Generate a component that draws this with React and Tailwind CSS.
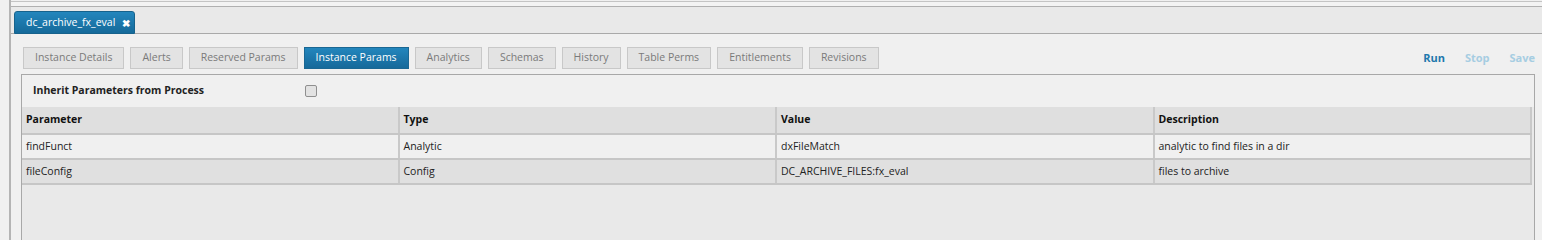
import React, { useState } from 'react';

const tabs = [
  'Instance Details',
  'Alerts',
  'Reserved Params',
  'Instance Params',
  'Analytics',
  'Schemas',
  'History',
  'Table Perms',
  'Entitlements',
  'Revisions',
];

const rows = [
  { param: 'findFunct', type: 'Analytic', value: 'dxFileMatch', desc: 'analytic to find files in a dir' },
  { param: 'fileConfig', type: 'Config', value: 'DC_ARCHIVE_FILES:fx_eval', desc: 'files to archive' },
];

export default function App() {
  const [active, setActive] = useState('Instance Params');
  const [inherit, setInherit] = useState(false);

  return (
    <div className="w-full h-[240px] bg-[#f0f0f0] flex overflow-hidden text-[10.5px] text-[#333]" style={{ fontFamily: '"Open Sans", "Noto Sans", sans-serif' }}>
      <div className="w-[9px] shrink-0 bg-[#f0f0f0]" />
      <div className="flex-1 flex flex-col border-l-2 border-[#b4b4b4]">
        {/* top strip */}
        <div className="h-[2px] border-b border-[#c4c4c4] bg-[#f0f0f0]" />
        <div className="h-[5px] bg-[#f3f3f3] border-b border-[#b0b0b0]" />
        <div className="h-[27px] bg-[#e9e9e9] border-b border-[#a9a9a9] flex items-end pl-[3px]">
          <div className="h-[23px] -mb-px flex items-center gap-[7px] pl-[11px] pr-[4px] rounded-t-[3px] border border-[#16628c] bg-gradient-to-b from-[#2386bd] to-[#156a9a] text-white text-[10.5px]">
            <span>dc_archive_fx_eval</span>
            <span className="font-bold text-[10px] leading-none">✖</span>
          </div>
        </div>

        {/* sub nav */}
        <div className="flex items-center justify-between pl-[12px] pr-[7px] pt-[13px] pb-[5px]">
          <div className="flex gap-[6px]">
            {tabs.map((t) => (
              <button
                key={t}
                onClick={() => setActive(t)}
                className={
                  active === t
                    ? 'h-[22px] px-[11px] border border-[#1a6793] bg-gradient-to-b from-[#2386bd] to-[#16699a] text-white'
                    : 'h-[22px] px-[11px] border border-[#c8c8c8] bg-[#e3e3e3] text-[#7a7a7a]'
                }
              >
                {t}
              </button>
            ))}
          </div>
          <div className="flex gap-[20px] font-bold text-[11px]">
            <span className="text-[#1f78ad]">Run</span>
            <span className="text-[#a6cde2]">Stop</span>
            <span className="text-[#a6cde2]">Save</span>
          </div>
        </div>

        {/* panel */}
        <div className="flex-1 ml-[10px] mr-[7px] border border-[#a8a8a8] border-b-0 bg-[#e9e9e9] flex flex-col">
          <div className="h-[32px] bg-[#f0f0f0] flex items-center pl-[11px]">
            <span className="w-[272px] font-bold text-[#222]">Inherit Parameters from Process</span>
            <button
              onClick={() => setInherit(!inherit)}
              className="w-[12px] h-[12px] rounded-[2px] border border-[#8f8f8f] bg-[#e2e2e2]"
            >
              {inherit ? <span className="block text-[9px] leading-[10px]">✓</span> : null}
            </button>
          </div>
          <div className="mr-[2px]">
            <div className="grid grid-cols-4 h-[28px] bg-[#dfdfdf] border-b-2 border-[#c6c6c6] font-bold text-[#111]">
              <div className="flex items-center pl-[4px] border-r-2 border-[#c9c9c9]">Parameter</div>
              <div className="flex items-center pl-[4px] border-r-2 border-[#c9c9c9]">Type</div>
              <div className="flex items-center pl-[4px] border-r-2 border-[#c9c9c9]">Value</div>
              <div className="flex items-center pl-[4px] border-r-2 border-[#c9c9c9]">Description</div>
            </div>
            {rows.map((r, i) => (
              <div
                key={r.param}
                className={`grid grid-cols-4 h-[25px] border-b-2 border-[#c6c6c6] text-[#222] ${i % 2 === 0 ? 'bg-[#f0f0f0]' : 'bg-[#e0e0e0]'}`}
              >
                <div className="flex items-center pl-[4px] border-r-2 border-[#c9c9c9]">{r.param}</div>
                <div className="flex items-center pl-[4px] border-r-2 border-[#c9c9c9]">{r.type}</div>
                <div className="flex items-center pl-[4px] border-r-2 border-[#c9c9c9]">{r.value}</div>
                <div className="flex items-center pl-[4px] border-r-2 border-[#c9c9c9]">{r.desc}</div>
              </div>
            ))}
          </div>
        </div>
      </div>
    </div>
  );
}
